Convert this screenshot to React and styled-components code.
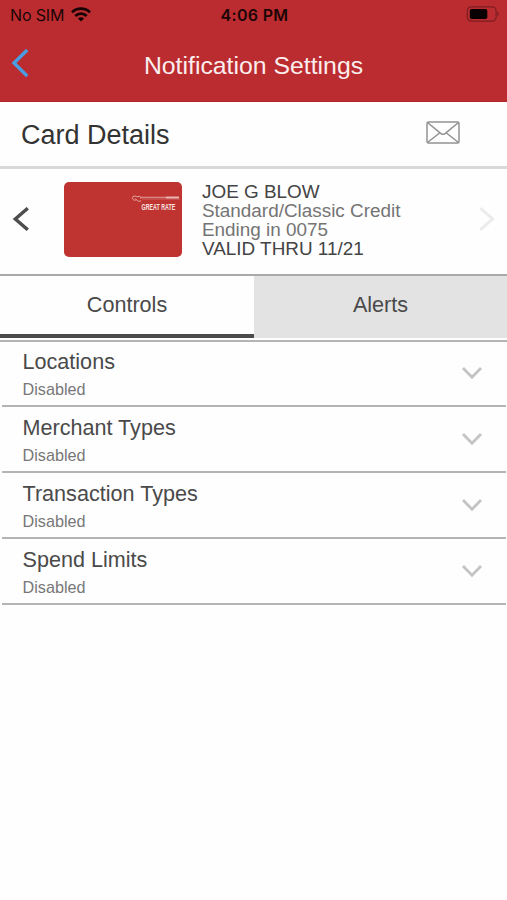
import styled, { createGlobalStyle } from "styled-components";

//Data
const sections = [
  { title: "Locations", status: "Disabled" },
  { title: "Merchant Types", status: "Disabled" },
  { title: "Transaction Types", status: "Disabled" },
  { title: "Spend Limits", status: "Disabled" },
];

//Styling
const GlobalStyle = createGlobalStyle`
  * {
    box-sizing: border-box;
  }
  body {
    margin: 0;
    background: #fefefe;
    color: #4a4a4a;
    font-family: "Liberation Sans", Arial, sans-serif;
  }
  svg {
    display: block;
    flex: none;
  }
`;

const Screen = styled.main`
  width: 507px;
  height: 900px;
  overflow: hidden;
`;

const TopBar = styled.header`
  height: 102px;
  background: #bb2c30;
  border-bottom: 1px solid #b3252a;
`;

const StatusBar = styled.div`
  display: grid;
  grid-template-columns: 1fr auto 1fr;
  align-items: center;
  height: 29px;
  padding: 0 8px 0 10px;
  color: #1b0506;
  font-family: Inter, sans-serif;
  font-size: 16px;
  letter-spacing: -0.15px;
`;

const Carrier = styled.div`
  display: flex;
  align-items: center;
  gap: 7px;
`;

const Time = styled.div`
  font-weight: 600;
  font-size: 16px;
  letter-spacing: 0.3px;
`;

const Battery = styled.div`
  justify-self: end;
  padding-bottom: 2px;
`;

const NavBar = styled.div`
  display: grid;
  grid-template-columns: 40px 1fr 40px;
  align-items: center;
  height: 72px;
`;

const BackButton = styled.button`
  padding: 0 0 4px 11px;
  border: 0;
  background: none;
`;

const NavTitle = styled.h1`
  margin: 2px 0 0;
  color: #fbeeee;
  font-size: 24.8px;
  font-weight: 400;
  line-height: 30px;
  text-align: center;
`;

const Heading = styled.div`
  display: flex;
  align-items: center;
  justify-content: space-between;
  height: 67px;
  padding: 0 47px 4px 21px;
  border-bottom: 3px solid #d9d9d9;
`;

const HeadingTitle = styled.h2`
  margin: 5px 0 0;
  color: #333;
  font-size: 27px;
  font-weight: 400;
  line-height: 32px;
`;

const Carousel = styled.section`
  display: flex;
  align-items: center;
  height: 107px;
  padding: 0 11px 5px 12px;
  border-bottom: 2px solid #a9a9a9;
`;

const CardImage = styled.div`
  display: flex;
  flex-direction: column;
  align-items: flex-end;
  width: 118px;
  height: 75px;
  margin-left: 34px;
  padding: 13px 1px 0 0;
  border-radius: 5px;
  background: #bf3431;
`;

const CardLabel = styled.div`
  margin-right: 6px;
  color: #f9e3e1;
  font-size: 9.5px;
  font-weight: 700;
  line-height: 8px;
  white-space: nowrap;
  transform: scaleX(0.56);
  transform-origin: right;
`;

const CardInfo = styled.div`
  flex: 1;
  margin: 1px 0 0 20px;
  font-size: 18.9px;
  line-height: 19px;
`;

const InfoLine = styled.div`
  color: ${(props) => (props.$strong ? "#444" : "#747474")};
`;

const Tabs = styled.div`
  display: flex;
  height: 64px;
  border-bottom: 2px solid #fefefe;
`;

const Tab = styled.button`
  flex: ${(props) => (props.$active ? "0 0 254px" : "1")};
  padding: 0 0 ${(props) => (props.$active ? "1px" : "5px")};
  border: 0;
  border-bottom: ${(props) => (props.$active ? "4px solid #4b4b4b" : "0")};
  background: ${(props) => (props.$active ? "#fefefe" : "#e3e3e3")};
  color: #4a4a4a;
  font-family: inherit;
  font-size: 21.6px;
`;

const List = styled.ul`
  margin: 0;
  padding: 0;
  border-top: 2px solid #b4b4b4;
  list-style: none;
`;

const Row = styled.li`
  display: flex;
  align-items: center;
  justify-content: space-between;
  height: 66px;
  margin: 0 1px 0 2px;
  padding: 0 24px 0 20.5px;
  border-bottom: 2px solid #b4b4b4;

  &:first-child {
    height: 65px;
    padding-bottom: 1px;
  }
`;

const RowTitle = styled.div`
  margin-top: 4px;
  font-size: 21.6px;
  line-height: 26px;
`;

const RowStatus = styled.div`
  margin-top: 2px;
  color: #777;
  font-size: 16.2px;
  line-height: 24px;
`;

function Chevron({ width, height, points, color, stroke }) {
  return (
    <svg width={width} height={height} viewBox={`0 0 ${width} ${height}`}>
      <polyline
        points={points}
        fill="none"
        stroke={color}
        strokeWidth={stroke}
      />
    </svg>
  );
}

function WifiIcon() {
  return (
    <svg width="20" height="15" viewBox="0 0 20 15" fill="none">
      <g stroke="#170304" strokeWidth="2.7">
        <path d="M1 5.4a12.8 12.8 0 0 1 18 0" />
        <path d="M4.3 9a8.1 8.1 0 0 1 11.4 0" />
      </g>
      <path d="M10 14.6l-3.1-3.1a4.4 4.4 0 0 1 6.2 0z" fill="#170304" />
    </svg>
  );
}

function BatteryIcon() {
  return (
    <svg width="33" height="16" viewBox="0 0 33 16">
      <rect
        x="1.3"
        y="0.8"
        width="28.8"
        height="14.4"
        rx="4"
        fill="none"
        stroke="#7c1e21"
        strokeWidth="1.2"
      />
      <rect x="3.8" y="3" width="17.5" height="10" rx="1.8" fill="#090101" />
      <path d="M31.4 5.8c1.7.6 1.7 3.8 0 4.4z" fill="#7c1e21" />
    </svg>
  );
}

function MailIcon() {
  return (
    <svg
      width="34"
      height="23"
      viewBox="0 0 34 23"
      fill="none"
      stroke="#929292"
      strokeWidth="1.5"
    >
      <rect x="1" y="1" width="32" height="21" rx="1.5" />
      <path d="M1.5 1.5L15 12.6q2 1.4 4 0L32.5 1.5M1.5 21.5l12.7-10M32.5 21.5l-12.7-10" />
    </svg>
  );
}

// Guitar outline with a thin strip running along its neck
function CardLogo() {
  return (
    <svg width="50" height="8" viewBox="0 0 50 8" fill="none">
      <path
        d="M4.5 5.4C1 5.2.4 1.6 3 1.1c2-.4 2.4 1.2 4 .5 2-.8 3.3.4 2.7 2M4 3.6l3.6 2.8 2.5-.6"
        stroke="#eab1ad"
        strokeWidth="0.9"
      />
      <path d="M9 2.4h26" stroke="#d98783" strokeWidth="1.4" />
      <path d="M11 4h38" stroke="#cf6864" strokeWidth="0.9" />
      <path d="M35 2.5h13" stroke="#e9b5b2" strokeWidth="2" />
    </svg>
  );
}

function App() {
  return (
    <>
      <GlobalStyle />
      <Screen>
        <TopBar>
          <StatusBar>
            <Carrier>
              No SIM
              <WifiIcon />
            </Carrier>
            <Time>4:06 PM</Time>
            <Battery>
              <BatteryIcon />
            </Battery>
          </StatusBar>
          <NavBar>
            <BackButton aria-label="Back">
              <Chevron
                width={18}
                height={30}
                points="16.2,2 3,15 16.2,28"
                color="#4a9de0"
                stroke={3.4}
              />
            </BackButton>
            <NavTitle>Notification Settings</NavTitle>
          </NavBar>
        </TopBar>

        <Heading>
          <HeadingTitle>Card Details</HeadingTitle>
          <MailIcon />
        </Heading>

        <Carousel>
          <Chevron
            width={18}
            height={24}
            points="15.8,1.2 3.3,12 15.8,22.8"
            color="#4d4d4d"
            stroke={3.4}
          />
          <CardImage>
            <CardLogo />
            <CardLabel>GREAT RATE</CardLabel>
          </CardImage>
          <CardInfo>
            <InfoLine $strong>JOE G BLOW</InfoLine>
            <InfoLine>Standard/Classic Credit</InfoLine>
            <InfoLine>Ending in 0075</InfoLine>
            <InfoLine $strong>VALID THRU 11/21</InfoLine>
          </CardInfo>
          <Chevron
            width={18}
            height={24}
            points="2.2,1.2 14.7,12 2.2,22.8"
            color="#ececec"
            stroke={3}
          />
        </Carousel>

        <Tabs>
          <Tab $active>Controls</Tab>
          <Tab>Alerts</Tab>
        </Tabs>

        <List>
          {sections.map((section) => (
            <Row key={section.title}>
              <div>
                <RowTitle>{section.title}</RowTitle>
                <RowStatus>{section.status}</RowStatus>
              </div>
              <Chevron
                width={20}
                height={14}
                points="1,2 10,11.3 19,2"
                color="#c4c4c4"
                stroke={2.8}
              />
            </Row>
          ))}
        </List>
      </Screen>
    </>
  );
}

export default App;
